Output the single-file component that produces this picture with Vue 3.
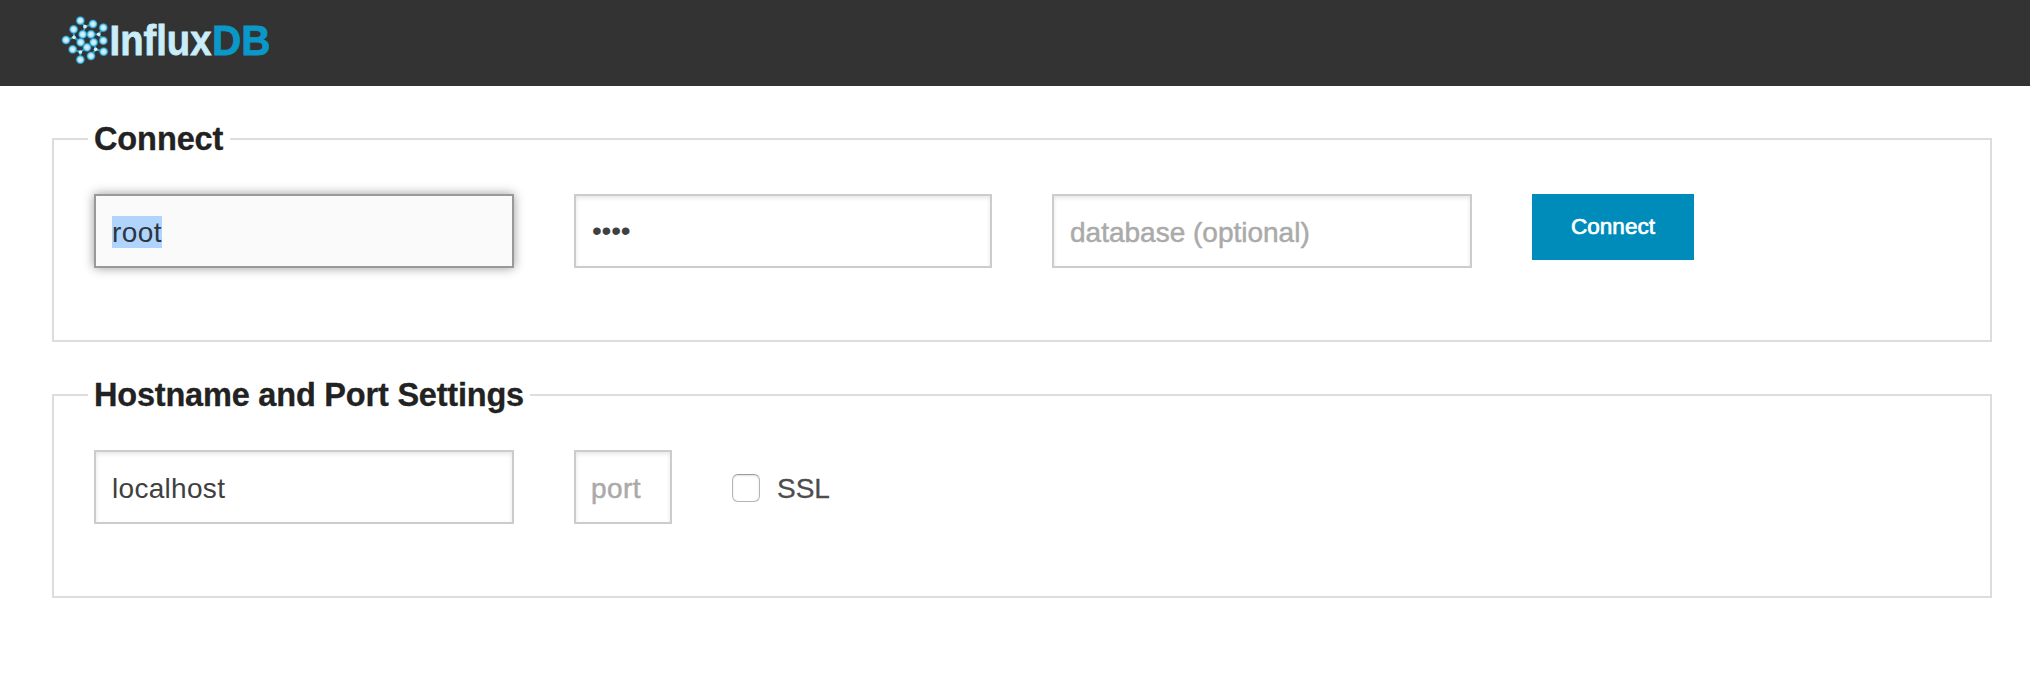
<script setup>
import { ref } from 'vue'

const username = ref('root')
const password = ref('root')
const hostname = ref('localhost')

// Each cluster of the logo mark: a hub joined to three outer nodes.
const clusters = [
  { hub: [75, 50], nodes: [[61, 32], [99, 42], [68, 73]] },
  { hub: [116, 73], nodes: [[93, 73], [130, 53], [130, 92]] },
  { hub: [42, 82], nodes: [[41, 58], [18, 90], [62, 97]] },
  { hub: [61, 126], nodes: [[38, 118], [81, 112], [61, 149]] },
  { hub: [107, 118], nodes: [[101, 97], [131, 125], [93, 138]] },
]
</script>

<template>
  <div class="page">
    <header class="topbar">
      <svg class="logo" width="216" height="60" viewBox="0 0 216 60" role="img" aria-label="InfluxDB">
        <defs>
          <radialGradient id="node">
            <stop offset="0" stop-color="#e0f6fe" />
            <stop offset="0.5" stop-color="#b8e6f7" />
            <stop offset="0.78" stop-color="#3fb0da" />
            <stop offset="1" stop-color="#1089b6" stop-opacity="0.4" />
          </radialGradient>
        </defs>
        <g transform="scale(0.33333)">
          <g v-for="(c, i) in clusters" :key="i">
            <line
              v-for="(n, j) in c.nodes" :key="'l' + j"
              :x1="c.hub[0]" :y1="c.hub[1]" :x2="n[0]" :y2="n[1]"
              stroke="#2ba0cb" stroke-width="6"
            />
            <circle v-for="(n, j) in c.nodes" :key="'n' + j" :cx="n[0]" :cy="n[1]" r="14" fill="url(#node)" />
            <circle :cx="c.hub[0]" :cy="c.hub[1]" r="5.5" fill="#d5f2fc" />
          </g>
        </g>
        <text class="word light" x="49.5" y="45" textLength="102" lengthAdjust="spacingAndGlyphs">Influx</text>
        <text class="word blue" x="152" y="45" textLength="58.5" lengthAdjust="spacingAndGlyphs">DB</text>
      </svg>
    </header>

    <main class="content">
      <section class="group">
        <h2 class="legend connect">Connect</h2>
        <div class="row">
          <div class="field focused"><span class="selected">{{ username }}</span></div>
          <div class="field narrow"><span class="dots">{{ '•'.repeat(password.length) }}</span></div>
          <div class="field"><span class="placeholder">database (optional)</span></div>
          <button class="button" type="button"><span>Connect</span></button>
        </div>
      </section>

      <section class="group">
        <h2 class="legend host">Hostname and Port Settings</h2>
        <div class="row">
          <div class="field"><span class="value">{{ hostname }}</span></div>
          <div class="field port"><span class="placeholder">port</span></div>
          <label class="check"><i class="box"></i><span>SSL</span></label>
        </div>
      </section>
    </main>
  </div>
</template>

<style>
body {
  margin: 0;
  background: #fff;
}
</style>

<style scoped>
.page {
  width: 2030px;
  height: 684px;
  overflow: hidden;
  background: #fff;
  font-family: "Liberation Sans", Arial, sans-serif;
}
.topbar {
  box-sizing: border-box;
  height: 86px;
  padding: 10px 60px 0;
  background: #333;
}
.logo {
  display: block;
}
.word {
  font-size: 43px;
  font-weight: 700;
  stroke-width: 0.8px;
}
.light {
  fill: #c9edf9;
  stroke: #c9edf9;
}
.blue {
  fill: #0a98c8;
  stroke: #0a98c8;
}
.content {
  padding: 52px 38px 0 52px;
}
.group {
  box-sizing: border-box;
  height: 204px;
  margin-bottom: 52px;
  padding-left: 34px;
  border: 2px solid #ddd;
}
.legend {
  box-sizing: border-box;
  height: 40px;
  margin: -21px 0 0;
  padding: 0 6px;
  background: #fff;
  color: #222;
  font-size: 32.5px;
  font-weight: 700;
  line-height: 40px;
  white-space: nowrap;
  -webkit-text-stroke: 0.3px #222;
}
.connect {
  width: 142px;
  letter-spacing: -0.1px;
}
.host {
  width: 442px;
  letter-spacing: -0.2px;
}
.row {
  display: flex;
  gap: 60px;
  align-items: flex-start;
  padding: 35px 0 0 6px;
}
.field {
  box-sizing: border-box;
  display: flex;
  align-items: center;
  width: 420px;
  height: 74px;
  padding: 2px 16px 0;
  border: 2px solid #ccc;
  box-shadow: inset 0 2px 4px rgba(0, 0, 0, 0.1);
  color: #404040;
  font-size: 28px;
  line-height: 34px;
  white-space: nowrap;
}
.narrow {
  width: 418px;
}
.port {
  width: 98px;
}
.focused {
  background: #fafafa;
  border-color: #999;
  box-shadow: 0 0 10px #999;
}
.selected {
  width: 50px;
  height: 32px;
  background: #b0d4fc;
  color: #2c3540;
  letter-spacing: 0.4px;
}
.value {
  padding-top: 2px;
  letter-spacing: 0.3px;
}
.dots {
  margin: -2px 0 0;
  letter-spacing: -0.2px;
}
.placeholder {
  padding-top: 2px;
  color: #aaa;
  -webkit-text-stroke: 0.5px #aaa;
}
.port .placeholder {
  margin-left: -1px;
  letter-spacing: 0.4px;
}
.button {
  box-sizing: border-box;
  width: 162px;
  height: 66px;
  padding: 0;
  border: 0;
  background: #008cba;
  color: #fff;
  font-family: inherit;
  font-size: 22.5px;
  -webkit-text-stroke: 0.7px #fff;
}
.check {
  display: flex;
  align-items: center;
  height: 74px;
  padding-top: 2px;
  box-sizing: border-box;
  color: #4d4d4d;
  font-size: 28px;
  line-height: 32px;
}
.box {
  box-sizing: border-box;
  width: 28px;
  height: 28px;
  margin: 0 17px 0 0;
  border: 1px solid #b4b4b4;
  border-top-color: #999;
  border-radius: 6px;
  box-shadow: inset 0 1px 2px rgba(0, 0, 0, 0.12);
}
.check span {
  padding-top: 1px;
  -webkit-text-stroke: 0.3px #4d4d4d;
}
</style>
